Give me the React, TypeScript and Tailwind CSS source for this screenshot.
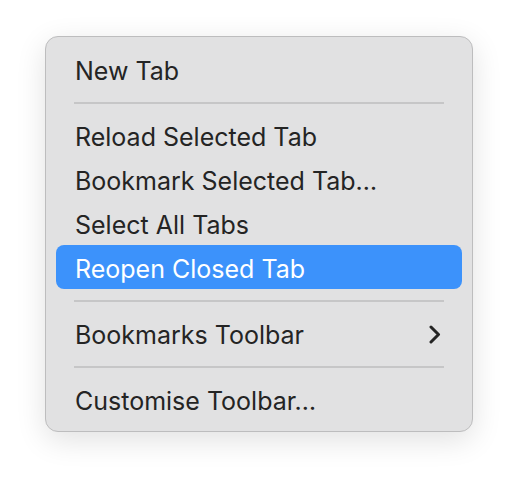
import React from "react";

function Item({ label, active, sub }: { label: string; active?: boolean; sub?: boolean }) {
  return (
    <div className="px-[10px]">
      <div
        className={
          "h-[44px] rounded-[8px] flex items-center justify-between pl-[19px] pr-[21px] " +
          (active ? "bg-[#3c92fb] text-white" : "text-[#242424]")
        }
      >
        <span className="leading-none pt-[4px]">{label}</span>
        {sub && (
          <svg width="12" height="19" viewBox="0 0 12 19" fill="none" className="mt-[2px]">
            <polyline points="2,2 9.5,9.5 2,17" stroke="#242424" strokeWidth="3" strokeLinecap="round" strokeLinejoin="round" />
          </svg>
        )}
      </div>
    </div>
  );
}

function Sep() {
  return (
    <div className="h-[22px] flex items-center px-[28px] pt-[1px]">
      <div className="h-[2px] w-full bg-[#c6c6c7]" />
    </div>
  );
}

export default function App() {
  return (
    <div className="w-[518px] h-[486px] bg-white pl-[45px] pt-[36px]" style={{ fontFamily: "Inter, 'Noto Sans', sans-serif" }}>
      <div className="w-[428px] rounded-[13px] bg-[#e1e1e2] border border-[#bdbdbe] py-[10px] text-[25px] shadow-[0_8px_30px_rgba(0,0,0,0.12)]">
        <Item label="New Tab" />
        <Sep />
        <Item label="Reload Selected Tab" />
        <Item label="Bookmark Selected Tab…" />
        <Item label="Select All Tabs" />
        <Item label="Reopen Closed Tab" active />
        <Sep />
        <Item label="Bookmarks Toolbar" sub />
        <Sep />
        <Item label="Customise Toolbar…" />
      </div>
    </div>
  );
}
